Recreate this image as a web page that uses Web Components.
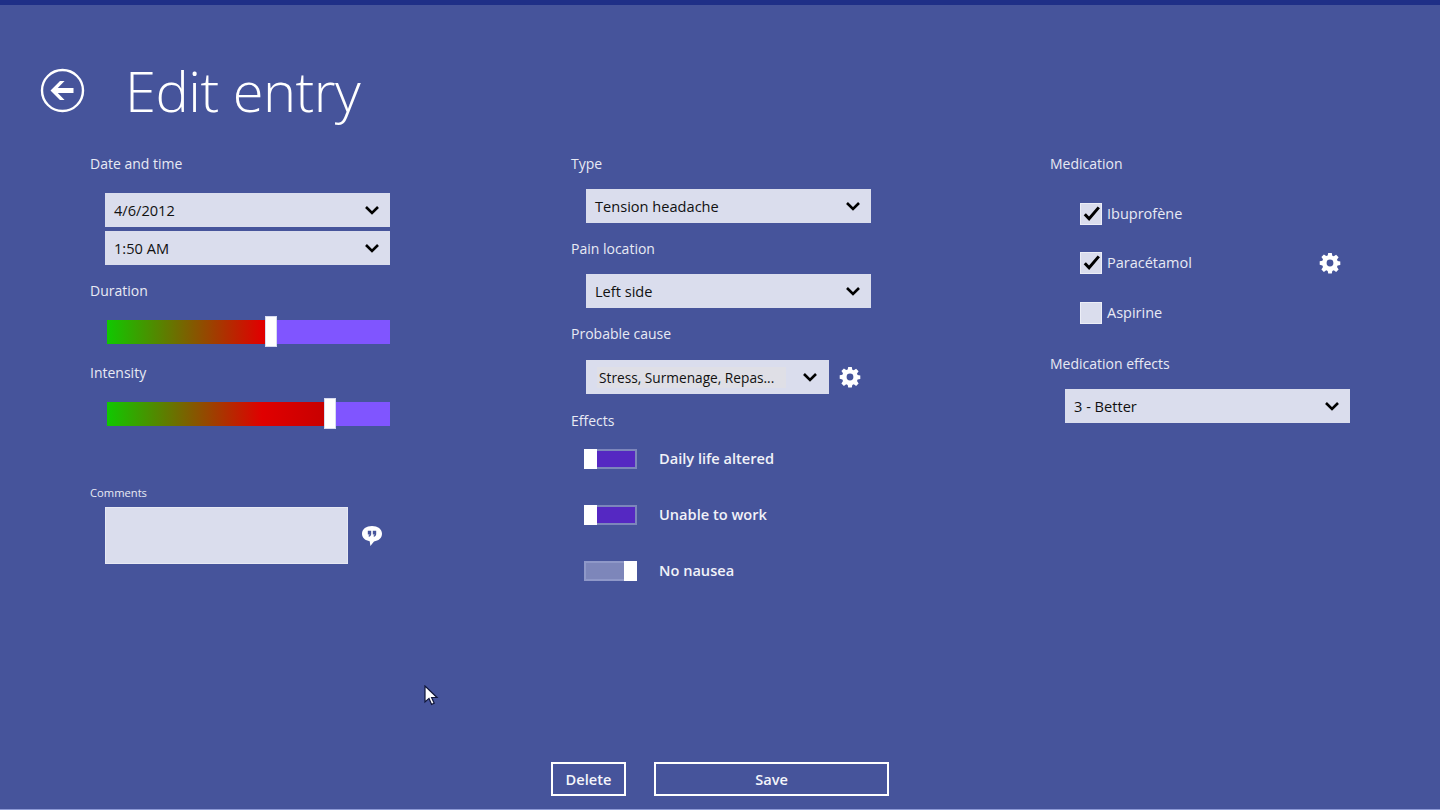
<!DOCTYPE html>
<html lang="en">
<head>
<meta charset="utf-8">
<title>Edit entry</title>
<style>
  html, body { margin: 0; height: 100%; background: #46549b; }
</style>
</head>
<body>
<entry-page></entry-page>
<script>
const FONT = `"Open Sans", "Noto Sans", "Liberation Sans", sans-serif`;

class FieldLabel extends HTMLElement {
    constructor() {
        super();
        this.attachShadow({ mode: 'open' });
        this.shadowRoot.innerHTML = `
            <style>
                :host { display: block; height: 20px; line-height: 20px; font-size: 14px; color: #e8eaf4; white-space: nowrap; }
                :host([small]) { height: 16px; line-height: 16px; font-size: 11.2px; }
            </style>
            <slot></slot>
        `;
    }
}

class SelectBox extends HTMLElement {
    constructor() {
        super();
        this.attachShadow({ mode: 'open' });
        this.shadowRoot.innerHTML = `
            <style>
                :host { display: flex; align-items: center; box-sizing: border-box; width: 285px; height: 34px; margin-left: 15px; padding: 0 10px 0 9px; background: #dadded; color: #111; font-size: 14.6px; }
                :host([chip]) { width: 243px; padding: 0 11px; font-size: 13.7px; }
                .text { flex: 1; white-space: nowrap; }
                :host([chip]) .text { flex: 0 0 189px; box-sizing: border-box; padding-left: 2px; height: 21px; line-height: 21px; background: #dfdfe6; }
                :host([chip]) svg { margin-left: auto; }
                svg { display: block; }
            </style>
            <span class="text"><slot></slot></span>
            <svg width="16" height="12" viewBox="0 0 16 12"><path d="M2 3l6 6 6-6" fill="none" stroke="#000" stroke-width="2.6"/></svg>
        `;
    }
}

class SliderBar extends HTMLElement {
    constructor() {
        super();
        this.attachShadow({ mode: 'open' });
    }
    connectedCallback() {
        const value = this.getAttribute('value') || '0';
        this.shadowRoot.innerHTML = `
            <style>
                :host { display: flex; align-items: center; width: 283px; height: 31px; margin-left: 17px; }
                .fill { width: ${value}px; height: 24px; background: linear-gradient(90deg, #10c800 0, #e00000 155px, #c80000 218px); }
                .thumb { flex: none; box-sizing: border-box; width: 12px; height: 31px; background: #fff; border: 1px solid #d7dbef; }
                .rest { flex: 1; height: 24px; background: #8055ff; }
            </style>
            <div class="fill"></div><div class="thumb"></div><div class="rest"></div>
        `;
    }
}

class ToggleSwitch extends HTMLElement {
    constructor() {
        super();
        this.attachShadow({ mode: 'open' });
        this.shadowRoot.innerHTML = `
            <style>
                :host { display: flex; align-items: center; height: 20px; margin-left: 13px; font-size: 14.6px; font-weight: 600; color: #f1f2f8; white-space: nowrap; line-height: 18px; }
                .sw { display: flex; width: 53px; height: 20px; margin-right: 22px; }
                .thumb { flex: none; width: 13px; background: #fff; }
                .track { flex: 1; box-sizing: border-box; border: 2px solid #7c86bb; border-left: 0; background: #5528c2; }
                .name { margin-top: -2px; }
                :host([off]) .sw { flex-direction: row-reverse; }
                :host([off]) .track { background: #7d86ba; border: 2px solid #8f98c8; border-right: 0; }
            </style>
            <div class="sw"><div class="thumb"></div><div class="track"></div></div>
            <span class="name"><slot></slot></span>
        `;
    }
}

class CheckItem extends HTMLElement {
    constructor() {
        super();
        this.attachShadow({ mode: 'open' });
        this.shadowRoot.innerHTML = `
            <style>
                :host { display: flex; align-items: center; height: 22px; margin-left: 30px; font-size: 14.5px; color: #e8eaf4; white-space: nowrap; }
                .box { flex: none; box-sizing: border-box; width: 22px; height: 22px; margin-right: 5px; background: #dadded; border: 1px solid #eceef7; }
                svg { display: block; visibility: hidden; }
                :host([checked]) svg { visibility: visible; }
                .name { flex: 1; margin-top: -1px; }
                ::slotted(gear-icon) { margin-right: 9px; }
            </style>
            <div class="box"><svg width="20" height="20" viewBox="0 0 20 20"><path d="M3.8 10.200l4.300 4.600L17.800 3.400" fill="none" stroke="#000" stroke-width="3"/></svg></div>
            <span class="name"><slot></slot></span>
            <slot name="action"></slot>
        `;
    }
}

class GearIcon extends HTMLElement {
    constructor() {
        super();
        this.attachShadow({ mode: 'open' });
        this.shadowRoot.innerHTML = `
            <style>
                :host { display: block; width: 22px; height: 22px; }
                svg { display: block; }
            </style>
            <svg width="22" height="22" viewBox="0 0 22 22">
                <path fill="#fff" fill-rule="evenodd" d="M9.2 1h3.600l.5 2.700 1.500.6 2.300-1.600 2.500 2.500-1.600 2.300.6 1.500 2.700.5v3.600l-2.700.5-.6 1.500 1.600 2.300-2.500 2.500-2.300-1.600-1.500.6-.5 2.700H9.200l-.5-2.700-1.500-.6-2.300 1.600-2.500-2.500 1.600-2.300-.6-1.500L.7 12.800V9.200l2.700-.5.6-1.500-1.600-2.300 2.500-2.500 2.300 1.600 1.500-.6zM11 7.600a3.400 3.400 0 1 0 0 6.800 3.400 3.400 0 0 0 0-6.800z"/>
            </svg>
        `;
    }
}

class CommentBox extends HTMLElement {
    constructor() {
        super();
        this.attachShadow({ mode: 'open' });
        this.shadowRoot.innerHTML = `
            <style>
                :host { display: flex; align-items: center; margin-left: 15px; }
                .area { box-sizing: border-box; width: 243px; height: 57px; background: #dadded; border: 1px solid #e6e8f3; margin-right: 13px; }
                svg { display: block; }
            </style>
            <div class="area"></div>
            <svg width="22" height="22" viewBox="0 0 22 22">
                <path fill="#fff" fill-rule="evenodd" d="M11 1c5.600 0 10 3 10 7.800 0 4.400-3.600 7.200-8 7.600L9.400 21l-.7-4.800C4.400 15.600 1 13 1 8.800 1 4 5.400 1 11 1z
                M6.800 5.800h3.400v3.200c0 1.500-.9 2.500-2.300 2.800l-.5-1c.7-.2 1.100-.6 1.200-1.300H6.800z
                M11.800 5.800h3.400v3.200c0 1.500-.9 2.500-2.300 2.800l-.5-1c.7-.2 1.100-.6 1.200-1.300h-1.800z"/>
            </svg>
        `;
    }
}

class ActionButton extends HTMLElement {
    constructor() {
        super();
        this.attachShadow({ mode: 'open' });
        this.shadowRoot.innerHTML = `
            <style>
                :host { display: flex; align-items: center; justify-content: center; box-sizing: border-box; height: 34px; border: 2px solid #fff; font-size: 14.6px; font-weight: 600; color: #f4f5fa; }
            </style>
            <slot></slot>
        `;
    }
}

class EntryPage extends HTMLElement {
    constructor() {
        super();
        this.attachShadow({ mode: 'open' });
        this.shadowRoot.innerHTML = `
            <style>
                :host { display: flex; flex-direction: column; box-sizing: border-box; height: 810px; position: relative; overflow: hidden; background: #46549b; border-top: 5px solid #1f2f87; border-bottom: 1px solid #8f9bd6; font-family: ${FONT}; }
                header { display: flex; align-items: center; height: 148px; box-sizing: border-box; padding: 22px 0 0 40px; }
                header svg { display: block; margin-right: 40px; }
                h1 { margin: 0; font-size: 56px; line-height: 70px; font-weight: 300; color: #fff; letter-spacing: -0.5px; }
                main { display: grid; grid-template-columns: 481px 479px 1fr; padding-left: 90px; }
                section { display: flex; flex-direction: column; }
                .row { display: flex; align-items: center; gap: 10px; }
                .row select-box { flex: none; }
                .actions { display: flex; gap: 28px; margin-top: auto; margin-bottom: 13px; padding-left: 551px; }
                .delete { width: 75px; }
                .save { width: 235px; }
                .cursor { position: absolute; left: 424px; top: 680px; }
            </style>
            <header>
                <svg width="45" height="45" viewBox="0 0 45 45">
                    <circle cx="22.500" cy="22.500" r="20.500" fill="none" stroke="#fff" stroke-width="2.400"/>
                    <path fill="#fff" d="M10.500 22.500l9.500-9.500h4.600l-6.800 6.900H33.500v5.200H17.800l6.800 6.900H20z"/>
                </svg>
                <h1>Edit entry</h1>
            </header>
            <main>
                <section>
                    <field-label style="padding-top:1px;margin-bottom:-1px">Date and time</field-label>
                    <select-box style="margin-top:20px">4/6/2012</select-box>
                    <select-box style="margin-top:4px">1:50 AM</select-box>
                    <field-label style="margin-top:16px">Duration</field-label>
                    <slider-bar value="157.5" style="margin-top:15px"></slider-bar>
                    <field-label style="margin-top:16px">Intensity</field-label>
                    <slider-bar value="216.5" style="margin-top:15px"></slider-bar>
                    <field-label small style="margin-top:56px">Comments</field-label>
                    <comment-box style="margin-top:6px"></comment-box>
                </section>
                <section>
                    <field-label style="padding-top:1px;margin-bottom:-1px">Type</field-label>
                    <select-box style="margin-top:16px">Tension headache</select-box>
                    <field-label style="margin-top:16px">Pain location</field-label>
                    <select-box style="margin-top:15px">Left side</select-box>
                    <field-label style="margin-top:16px">Probable cause</field-label>
                    <div class="row" style="margin-top:16px">
                        <select-box chip>Stress, Surmenage, Repas...</select-box>
                        <gear-icon></gear-icon>
                    </div>
                    <field-label style="margin-top:17px">Effects</field-label>
                    <toggle-switch style="margin-top:18px">Daily life altered</toggle-switch>
                    <toggle-switch style="margin-top:36px">Unable to work</toggle-switch>
                    <toggle-switch off style="margin-top:36px">No nausea</toggle-switch>
                </section>
                <section>
                    <field-label style="padding-top:1px;margin-bottom:-1px">Medication</field-label>
                    <check-item checked style="margin-top:30px;width:270px">Ibuprofène</check-item>
                    <check-item checked style="margin-top:27px;width:270px">Paracétamol<gear-icon slot="action"></gear-icon></check-item>
                    <check-item style="margin-top:28px;width:270px">Aspirine</check-item>
                    <field-label style="margin-top:30px">Medication effects</field-label>
                    <select-box style="margin-top:15px">3 - Better</select-box>
                </section>
            </main>
            <div class="actions">
                <action-button class="delete">Delete</action-button>
                <action-button class="save">Save</action-button>
            </div>
            <svg class="cursor" width="16" height="22" viewBox="0 0 16 22">
                <path d="M1 1v16l4-3.600 2.600 6 2.600-1.100-2.600-5.800h5.400z" fill="#fff" stroke="#10163a" stroke-width="1.200"/>
            </svg>
        `;
    }
}

customElements.define('field-label', FieldLabel);
customElements.define('select-box', SelectBox);
customElements.define('slider-bar', SliderBar);
customElements.define('toggle-switch', ToggleSwitch);
customElements.define('check-item', CheckItem);
customElements.define('gear-icon', GearIcon);
customElements.define('comment-box', CommentBox);
customElements.define('action-button', ActionButton);
customElements.define('entry-page', EntryPage);
</script>
</body>
</html>
